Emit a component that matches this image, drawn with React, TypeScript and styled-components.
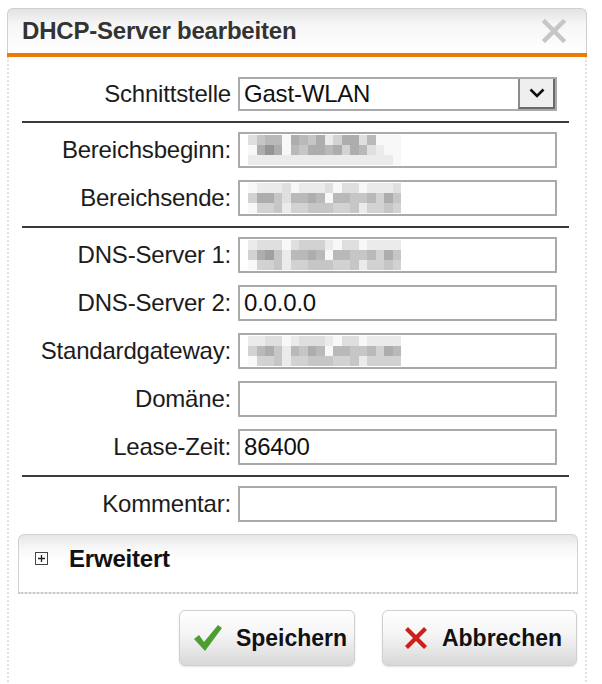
import React, { FC, ReactElement } from 'react';
import styled, { createGlobalStyle } from 'styled-components';

const GlobalStyle = createGlobalStyle`
    body {
        margin: 0;
        background: #ffffff;
        font-family: 'Liberation Sans', Arial, sans-serif;
    }
`;

const Dialog = styled.div`
    width: 580px;
    margin: 8px 0 0 7px;
    display: flex;
    flex-direction: column;
`;

const TitleBar = styled.div`
    height: 45px;
    box-sizing: border-box;
    display: flex;
    align-items: center;
    justify-content: space-between;
    padding: 0 20px 0 14px;
    border: 1px solid #cfcfcf;
    border-bottom: none;
    border-radius: 6px 6px 0 0;
    background: linear-gradient(#e3e3e3, #f6f6f6 35%, #ffffff);
`;

const Title = styled.h1`
    margin: 0;
    font-size: 24px;
    font-weight: bold;
    color: #333333;
    letter-spacing: -0.2px;
`;

const OrangeRule = styled.div`
    height: 4px;
    background: #ec7a06;
`;

const Body = styled.div`
    border-left: 2px dotted #e2e2e2;
    border-right: 2px dotted #e2e2e2;
    padding: 20px 0 16px;
    display: flex;
    flex-direction: column;
`;

const Group = styled.div`
    display: flex;
    flex-direction: column;
    gap: 12px;
`;

const Row = styled.div`
    display: grid;
    grid-template-columns: 222px 319px;
    column-gap: 7px;
    align-items: center;
`;

const Label = styled.label`
    text-align: right;
    font-size: 24px;
    letter-spacing: -0.2px;
    color: #1c1c1c;
`;

const Field = styled.div<{ $height?: number }>`
    height: ${({ $height }) => $height ?? 36}px;
    box-sizing: border-box;
    border: 2px solid #aaaaaa;
    background: #ffffff;
    display: flex;
    align-items: center;
    padding-left: 4px;
    font-size: 24px;
    letter-spacing: -0.2px;
    color: #111111;
    overflow: hidden;
`;

const SelectBox = styled(Field)`
    justify-content: space-between;
    padding-right: 0;
`;

const DropButton = styled.div`
    width: 37px;
    height: 100%;
    box-sizing: border-box;
    background: #efefef;
    border-left: 2px solid #8c8c8c;
    border-bottom: 2px solid #6a6a6a;
    border-right: 2px solid #6a6a6a;
    display: flex;
    align-items: center;
    justify-content: center;
`;

const Separator = styled.hr`
    margin: 10px 16px 9px 13px;
    border: none;
    height: 2px;
    background: #3a3a3a;
`;

const Mosaic = styled.div<{ $cols: number }>`
    display: grid;
    grid-template-columns: repeat(${({ $cols }) => $cols}, 8.5px);
    grid-auto-rows: 10px;
    margin-left: 4px;
`;

const Panel = styled.div`
    margin: 12px 7px 0 9px;
    height: 60px;
    box-sizing: border-box;
    border: 1px solid #d2d2d2;
    border-bottom: 2px dotted #c8c8c8;
    border-radius: 6px 6px 0 0;
    background: linear-gradient(#e6e6e6, #f7f7f7 22%, #ffffff 45%);
    padding: 10px 0 0 16px;
    display: flex;
    align-items: flex-start;
    gap: 21px;
`;

const PlusBox = styled.span`
    width: 13px;
    height: 13px;
    margin-top: 7px;
    box-sizing: border-box;
    border: 1px solid #444444;
    display: flex;
    align-items: center;
    justify-content: center;
`;

const PanelTitle = styled.span`
    font-size: 24px;
    font-weight: bold;
    letter-spacing: -0.2px;
    color: #111111;
`;

const Actions = styled.div`
    display: flex;
    justify-content: flex-end;
    gap: 27px;
    padding: 16px 8px 0 0;
`;

const Button = styled.button<{ $width: number }>`
    width: ${({ $width }) => $width}px;
    height: 56px;
    border: 1px solid #cfcfcf;
    border-radius: 6px;
    background: linear-gradient(#ffffff, #f4f4f4 45%, #d8d8d8);
    box-shadow: 0 1px 2px rgba(0, 0, 0, 0.12);
    display: flex;
    align-items: center;
    justify-content: center;
    gap: 13px;
    font-family: 'Liberation Sans', Arial, sans-serif;
    font-size: 23px;
    font-weight: bold;
    color: #111111;
    padding: 0 0 0 6px;
`;

// hex digit -> grey level of one mosaic cell
const shade = (c: string): string => {
    const v = Math.round(60 + parseInt(c, 16) * 12.5);
    return `rgb(${v},${v},${v})`;
};

const Pixels: FC<{ rows: string[] }> = ({ rows }): ReactElement => (
    <Mosaic $cols={rows[0].length}>
        {rows.flatMap((row, r) =>
            row.split('').map((c, i) => <span key={`${r}-${i}`} style={{ background: shade(c) }} />),
        )}
    </Mosaic>
);

const blurred: Record<string, string[]> = {
    begin: ['dbaaf9ab9ec99dafff', 'f979fab99a9c9adeff', 'eeeeeeeeeeeeeeeeef'],
    end: ['feeedfeeedfddfeeed', 'c99bdaa9afaabbac9b', 'fccbeccbbbccbeccbc'],
    dns1: ['edddfdcccefddfeeee', 'c98beaa9afaabbac9b', 'fccbeccbbbccbeccbc'],
    gateway: ['eeddfedddefddfeeee', 'ca9beab9afaabbac9a', 'fccbeccbbbccbecccc'],
};

const Chevron: FC = (): ReactElement => (
    <svg width="16" height="10" viewBox="0 0 16 10">
        <path d="M1.5 1.5 L8 8 L14.5 1.5" fill="none" stroke="#111" strokeWidth="2.6" />
    </svg>
);

const PlusGlyph: FC = (): ReactElement => (
    <svg width="9" height="9" viewBox="0 0 9 9">
        <path d="M4.5 1 V8 M1 4.5 H8" stroke="#222" strokeWidth="1.3" />
    </svg>
);

const CloseIcon: FC = (): ReactElement => (
    <svg width="24" height="24" viewBox="0 0 24 24">
        <path d="M3 3 L21 21 M21 3 L3 21" stroke="#c6c6c6" strokeWidth="4.5" strokeLinecap="square" />
    </svg>
);

const CheckIcon: FC = (): ReactElement => (
    <svg width="30" height="28" viewBox="0 0 30 28">
        <path d="M1 15 L6 11 L11 18 L25 1 L29 4 L12 27 Z" fill="#4c9f2f" />
    </svg>
);

const CrossIcon: FC = (): ReactElement => (
    <svg width="26" height="26" viewBox="0 0 26 26">
        <path
            d="M2 5 L5 2 L13 10 L21 2 L24 5 L16 13 L24 21 L21 24 L13 16 L5 24 L2 21 L10 13 Z"
            fill="#cc1f1a"
        />
    </svg>
);

const TextRow: FC<{ label: string; value?: string; pixels?: string[] }> = ({
    label,
    value,
    pixels,
}): ReactElement => (
    <Row>
        <Label>{label}</Label>
        <Field>{pixels ? <Pixels rows={pixels} /> : value}</Field>
    </Row>
);

const App: FC = (): ReactElement => (
    <>
        <GlobalStyle />
        <Dialog>
            <TitleBar>
                <Title>DHCP-Server bearbeiten</Title>
                <CloseIcon />
            </TitleBar>
            <OrangeRule />
            <Body>
                <Row>
                    <Label>Schnittstelle</Label>
                    <SelectBox $height={34}>
                        Gast-WLAN
                        <DropButton>
                            <Chevron />
                        </DropButton>
                    </SelectBox>
                </Row>
                <Separator />
                <Group>
                    <TextRow label="Bereichsbeginn:" pixels={blurred.begin} />
                    <TextRow label="Bereichsende:" pixels={blurred.end} />
                </Group>
                <Separator />
                <Group>
                    <TextRow label="DNS-Server 1:" pixels={blurred.dns1} />
                    <TextRow label="DNS-Server 2:" value="0.0.0.0" />
                    <TextRow label="Standardgateway:" pixels={blurred.gateway} />
                    <TextRow label="Domäne:" />
                    <TextRow label="Lease-Zeit:" value="86400" />
                </Group>
                <Separator />
                <TextRow label="Kommentar:" />
                <Panel>
                    <PlusBox>
                        <PlusGlyph />
                    </PlusBox>
                    <PanelTitle>Erweitert</PanelTitle>
                </Panel>
                <Actions>
                    <Button $width={176}>
                        <CheckIcon />
                        Speichern
                    </Button>
                    <Button $width={195}>
                        <CrossIcon />
                        Abbrechen
                    </Button>
                </Actions>
            </Body>
        </Dialog>
    </>
);

export default App;
